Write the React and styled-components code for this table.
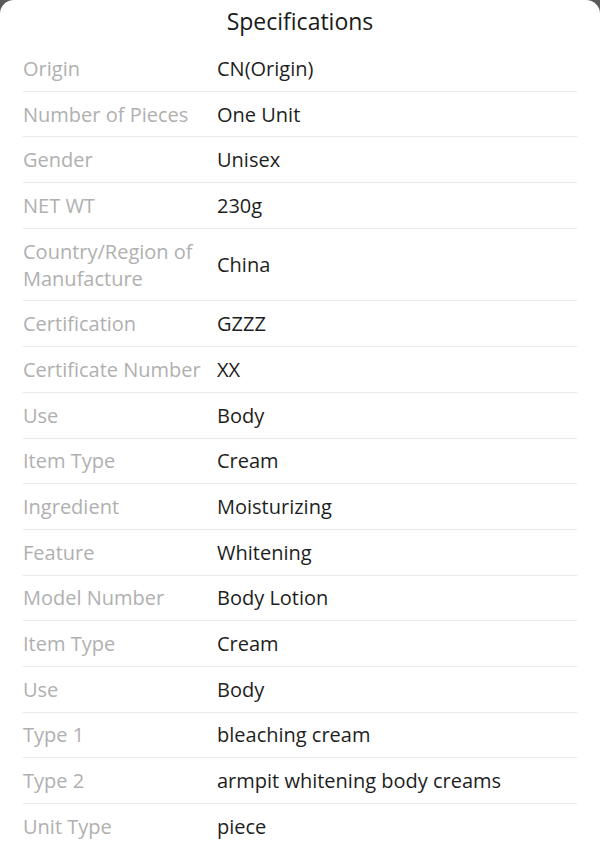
import React from 'react'
import styled, { createGlobalStyle } from 'styled-components'

const GlobalStyle = createGlobalStyle`
    html, body {
        margin: 0;
        padding: 0;
        background-color: #5a5a5a;
        font-family: "Open Sans", "Noto Sans", sans-serif;
    }
`;

const Sheet = styled.div`
    width: 600px;
    height: 846px;
    overflow: hidden;
    background-color: #ffffff;
    border-radius: 14px 14px 0 0;
    box-sizing: border-box;
`;

const Title = styled.h1`
    margin: 0;
    padding: 6px 0 10px;
    font-size: 23px;
    line-height: 30px;
    font-weight: 400;
    text-align: center;
    color: #1a1a1a;
`;

const List = styled.div`
    display: flex;
    flex-direction: column;
    padding: 0 23px;
`;

const Row = styled.div`
    display: grid;
    grid-template-columns: 194px 1fr;
    align-items: center;
    padding: 8.85px 0;
    border-bottom: 1px solid #e9e9e9;
    font-size: 20px;
    line-height: 27px;
`;

const Label = styled.div`
    color: #b0b0b0;
    padding-right: 4px;
`;

const Value = styled.div`
    color: #1e1e1e;
`;

const specs = [
    ['Origin', 'CN(Origin)'],
    ['Number of Pieces', 'One Unit'],
    ['Gender', 'Unisex'],
    ['NET WT', '230g'],
    ['Country/Region of Manufacture', 'China'],
    ['Certification', 'GZZZ'],
    ['Certificate Number', 'XX'],
    ['Use', 'Body'],
    ['Item Type', 'Cream'],
    ['Ingredient', 'Moisturizing'],
    ['Feature', 'Whitening'],
    ['Model Number', 'Body Lotion'],
    ['Item Type', 'Cream'],
    ['Use', 'Body'],
    ['Type 1', 'bleaching cream'],
    ['Type 2', 'armpit whitening body creams'],
    ['Unit Type', 'piece'],
]

const App = () => {
  return (
    <>
        <GlobalStyle />
        <Sheet>
            <Title>Specifications</Title>
            <List>
                {specs.map(([label, value], i) => (
                    <Row key={i}>
                        <Label>{label}</Label>
                        <Value>{value}</Value>
                    </Row>
                ))}
            </List>
        </Sheet>
    </>
  )
}

export default App;
